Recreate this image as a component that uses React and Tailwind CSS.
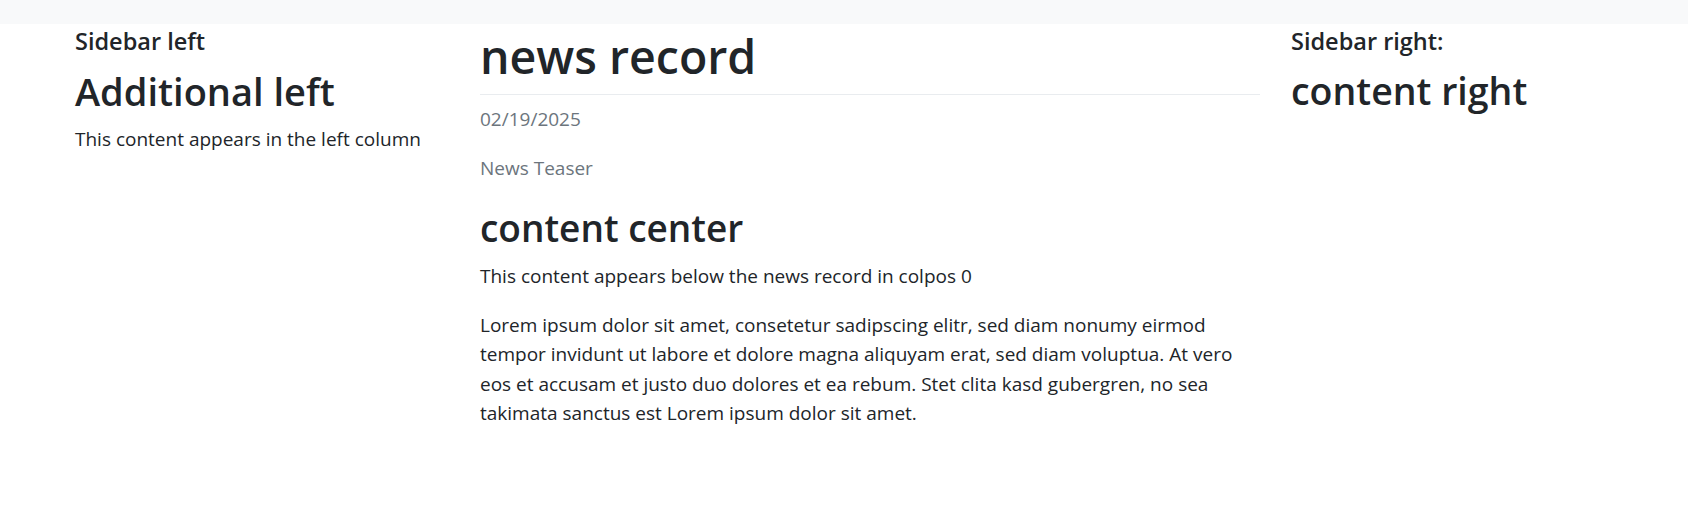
export default function App() {
  return (
    <div className="min-h-[507px] bg-white font-['Open_Sans','Liberation_Sans',sans-serif] text-[#212529]">
      <div className="h-6 bg-[#f8f9fa]" />
      <div className="flex pt-[2px]">
        <aside className="ml-[75px] w-[375px]">
          <h5 className="mb-3 text-[23.5px] font-semibold leading-[30px]">Sidebar left</h5>
          <h2 className="mb-[10px] text-[38px] font-semibold leading-[46px]">Additional left</h2>
          <p className="text-[19px] leading-[30px]">This content appears in the left column</p>
        </aside>
        <main className="ml-[30px] w-[780px]">
          <h1 className="border-b border-[#e9ecef] pb-[8px] text-[46.5px] font-semibold leading-[60px]">news record</h1>
          <p className="mt-[9px] text-[19px] leading-[30px] text-[#6c757d]">02/19/2025</p>
          <p className="mt-[19px] text-[19px] leading-[30px] text-[#6c757d]">News Teaser</p>
          <h2 className="mt-[22px] text-[37px] font-semibold leading-[46px]">content center</h2>
          <p className="mt-[10px] text-[19px] leading-[30px]">This content appears below the news record in colpos 0</p>
          <p className="mt-5 text-[19px] leading-[29.3px]">
            Lorem ipsum dolor sit amet, consetetur sadipscing elitr, sed diam nonumy eirmod tempor invidunt ut labore et dolore magna aliquyam erat, sed diam voluptua. At vero eos et accusam et justo duo dolores et ea rebum. Stet clita kasd gubergren, no sea takimata sanctus est Lorem ipsum dolor sit amet.
          </p>
        </main>
        <aside className="ml-[31px] w-[370px]">
          <h5 className="mb-3 text-[23.5px] font-semibold leading-[30px]">Sidebar right:</h5>
          <h2 className="text-[37.5px] font-semibold leading-[46px]">content right</h2>
        </aside>
      </div>
    </div>
  );
}
